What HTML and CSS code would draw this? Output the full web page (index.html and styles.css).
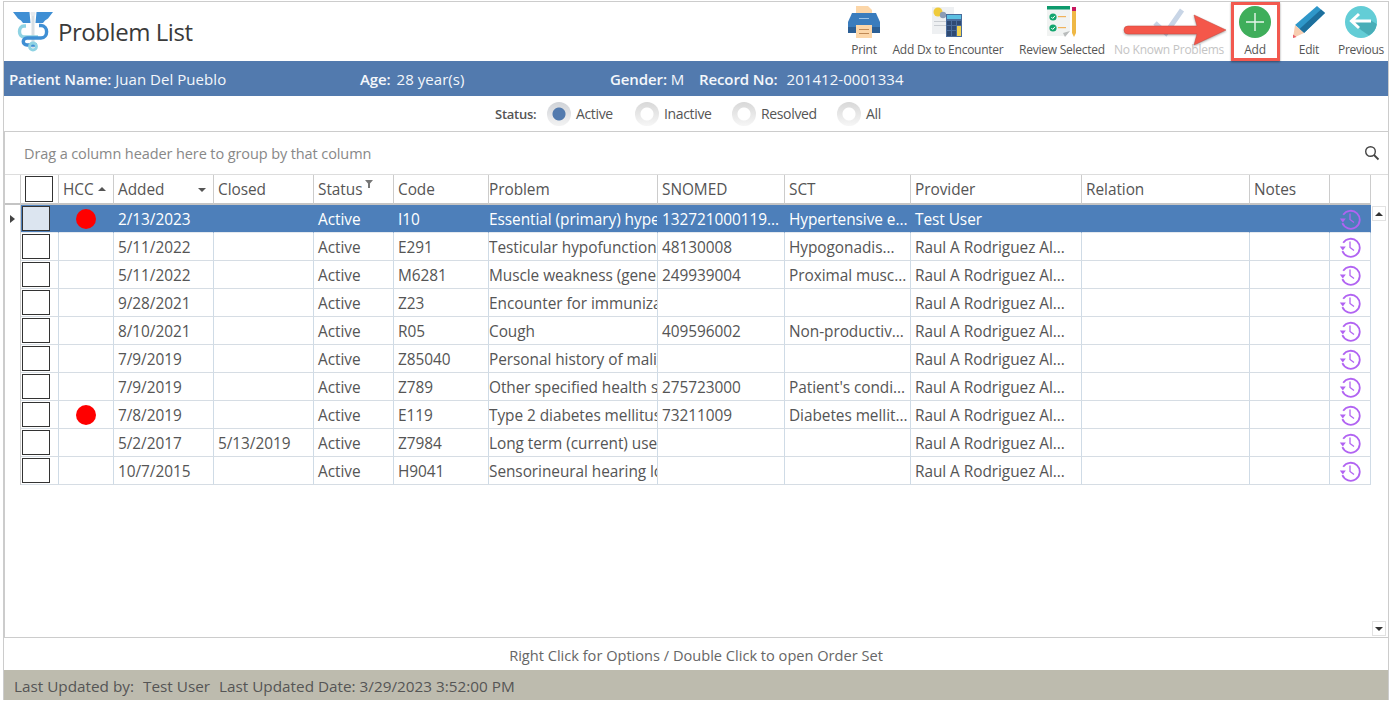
FILE: index.html
```html
<!DOCTYPE html>
<html lang="en">
<head>
<meta charset="utf-8">
<title>Problem List</title>
<link rel="stylesheet" href="styles.css">
</head>
<body>
<svg class="sprite" width="0" height="0" aria-hidden="true">
  <symbol id="history" viewBox="0 0 22 22">
    <path d="M4.200 6.800A9 9 0 1 1 3.400 15.200" fill="none" stroke="#b163f2" stroke-width="1.800"/>
    <path d="M0.800 10.400H6.800L3.800 14.600Z" fill="#b163f2"/>
    <path d="M11 5.500V11.500L15 14.500" fill="none" stroke="#b163f2" stroke-width="1.300"/>
  </symbol>
</svg>
<div class="app">
  <header class="top">
    <svg class="logo" width="40" height="40" viewBox="0 0 40 40">
      <path d="M0 0H16.500L17.500 11H10L8 8.500L5 6.500Z" fill="#3f8fd4"/>
      <path d="M40 0H23.500L22.500 11H30L32 8.500L35 6.500Z" fill="#3f8fd4"/>
      <rect x="18.500" y="0" width="3" height="36" fill="#d8dfe4"/>
      <circle cx="20" cy="1.500" r="2.500" fill="#e6eaee"/>
      <path d="M13 14H11C5 14 5 25 11 25H25" fill="none" stroke="#8fd3e3" stroke-width="3.400"/>
      <path d="M26 13.500H28C35.500 13.500 35.500 26 28 26H14C9 26 9 33 14 33H24" fill="none" stroke="#3f8fd4" stroke-width="3.400"/>
      <circle cx="20" cy="34.500" r="3.500" fill="none" stroke="#8fd3e3" stroke-width="2.800"/>
    </svg>
    <h1 class="title">Problem List</h1>
    <nav class="tools">
      <div class="tool tool-print">
        <svg width="32" height="32" viewBox="0 0 32 32">
          <path d="M8 0H20L24 4V12H8Z" fill="#fcd6a8"/>
          <path d="M4 7H28L32 16V27H0V16Z" fill="#3a7cbd"/>
          <rect x="0" y="21" width="32" height="6" fill="#2c5f95"/>
          <rect x="8" y="19" width="16" height="13" fill="#fcd6a8"/>
          <rect x="11" y="23" width="10" height="1" fill="#c08a55"/>
          <rect x="11" y="27" width="10" height="1" fill="#c08a55"/>
          <rect x="11" y="12" width="10" height="1" fill="#9cc3e6"/>
        </svg>
        <span>Print</span>
      </div>
      <div class="tool tool-dx">
        <svg width="32" height="32" viewBox="0 0 32 32">
          <rect x="0" y="1" width="22" height="27" fill="#eef0f2"/>
          <circle cx="6" cy="6" r="4.500" fill="#efcb3c"/>
          <circle cx="11" cy="9" r="3.200" fill="#8d9cb5"/>
          <rect x="2" y="15" width="12" height="1" fill="#c9cdd2"/>
          <rect x="2" y="19" width="12" height="1" fill="#c9cdd2"/>
          <rect x="14" y="8" width="16" height="23" fill="#4a6c9c"/>
          <rect x="15" y="9" width="14" height="4" fill="#5cc0e2"/>
          <path d="M15 15h4v4h-4zM20 15h4v4h-4zM25 15h4v4h-4zM15 20h4v4h-4zM20 20h4v4h-4zM15 25h4v5h-4zM20 25h4v5h-4z" fill="#2f4a73"/>
          <rect x="25" y="20" width="4" height="10" fill="#f3d34e"/>
        </svg>
        <span>Add Dx to Encounter</span>
      </div>
      <div class="tool tool-review">
        <svg width="32" height="32" viewBox="0 0 32 32">
          <path d="M1 0H24V25L19 30H1Z" fill="#f1f3f2"/>
          <rect x="1" y="0" width="23" height="3.500" fill="#0d9a6c"/>
          <path d="M24 25L17 27L19 31Z" fill="#b9bcbc"/>
          <circle cx="7" cy="11" r="3.600" fill="#12a56e"/>
          <circle cx="7" cy="22" r="3.600" fill="#12a56e"/>
          <path d="M5.300 11L6.700 12.400L9 9.800M5.300 22L6.700 23.400L9 20.800" fill="none" stroke="#fff" stroke-width="1"/>
          <rect x="12" y="10" width="8" height="1.200" fill="#f0b35c"/>
          <rect x="12" y="21" width="8" height="1.200" fill="#f0b35c"/>
          <rect x="26" y="1" width="4" height="4" fill="#c8175f"/>
          <path d="M26 5H30V27L28 31L26 27Z" fill="#efb845"/>
        </svg>
        <span>Review Selected</span>
      </div>
      <div class="tool tool-nkp is-disabled">
        <svg width="32" height="32" viewBox="0 0 32 32">
          <path d="M2 17L13 27L29 4" fill="none" stroke="#c8d5e6" stroke-width="5"/>
        </svg>
        <span>No Known Problems</span>
      </div>
      <div class="tool tool-add">
        <svg width="32" height="32" viewBox="0 0 32 32">
          <circle cx="16" cy="16" r="16" fill="#3fae5b"/>
          <path d="M16 7V25M7 16H25" stroke="#e8f6ec" stroke-width="1.400"/>
        </svg>
        <span>Add</span>
      </div>
      <div class="tool tool-edit">
        <svg width="32" height="32" viewBox="0 0 32 32">
          <path d="M24 0L32 7L11 27L2 19Z" fill="#2f97c9"/>
          <path d="M28 3.500L32 7L11 27L6.500 23Z" fill="#1d6f9c"/>
          <path d="M2 19L11 27L0 32Z" fill="#f7cdb0"/>
          <path d="M0 28.500L3.500 31L0 32Z" fill="#e8606a"/>
        </svg>
        <span>Edit</span>
      </div>
      <div class="tool tool-prev">
        <svg width="32" height="32" viewBox="0 0 32 32">
          <circle cx="16" cy="16" r="16" fill="#63cdd6"/>
          <path d="M9 17L16 24L24 29.500A16 16 0 0 0 31.800 18L25 14H9Z" fill="#49aeb8"/>
          <path d="M14 8L6.500 15L14 22M7 15H26" fill="none" stroke="#fff" stroke-width="3"/>
        </svg>
        <span>Previous</span>
      </div>
    </nav>
  </header>

  <section class="patient">
    <div class="pf pf-name"><b>Patient Name:</b> Juan Del Pueblo</div>
    <div class="pf pf-age"><b>Age:</b> 28 year(s)</div>
    <div class="pf pf-gender"><b>Gender:</b> M</div>
    <div class="pf pf-record"><b>Record No:</b> 201412-0001334</div>
  </section>

  <section class="status">
    <span class="status-label">Status:</span>
    <label class="radio is-on"><i></i>Active</label>
    <label class="radio r-inactive"><i></i>Inactive</label>
    <label class="radio r-resolved"><i></i>Resolved</label>
    <label class="radio r-all"><i></i>All</label>
  </section>

  <section class="grid">
    <div class="group">
      <span>Drag a column header here to group by that column</span>
      <svg width="16" height="16" viewBox="0 0 16 16"><circle cx="6.500" cy="6.500" r="4.800" fill="none" stroke="#444" stroke-width="1.400"/><path d="M10 10L14.500 14.500" stroke="#444" stroke-width="1.800"/></svg>
    </div>
    <div class="grid-body">
      <table class="tbl">
        <colgroup>
          <col class="c-ind"><col class="c-chk"><col class="c-hcc"><col class="c-date"><col class="c-date">
          <col class="c-status"><col class="c-code"><col class="c-prob"><col class="c-sno"><col class="c-sct">
          <col class="c-prov"><col class="c-rel"><col class="c-notes"><col class="c-hist">
        </colgroup>
        <thead>
          <tr>
            <th></th>
            <th class="chk-head"><span class="box"></span></th>
            <th><div class="th-in">HCC<i class="sort-up"></i></div></th>
            <th><div class="th-in th-spread">Added<i class="sort-down"></i></div></th>
            <th>Closed</th>
            <th><div class="th-in">Status<svg class="funnel" width="8" height="8" viewBox="0 0 8 8"><path d="M0 0H8L5 3.500V8H3V3.500Z" fill="#777"/></svg></div></th>
            <th>Code</th><th>Problem</th><th>SNOMED</th><th>SCT</th><th>Provider</th><th>Relation</th><th>Notes</th><th></th>
          </tr>
        </thead>
        <tbody>
          <tr class="sel">
            <td class="ind"><i></i></td><td class="chk"><span class="box"></span></td><td class="hcc"><i class="dot"></i></td>
            <td>2/13/2023</td><td></td><td>Active</td><td>I10</td><td>Essential (primary) hypertension</td><td>132721000119...</td><td>Hypertensive e...</td><td>Test User</td><td></td><td></td>
            <td class="hist"><svg width="22" height="22"><use href="#history"/></svg></td>
          </tr>
          <tr>
            <td class="ind"></td><td class="chk"><span class="box"></span></td><td class="hcc"></td>
            <td>5/11/2022</td><td></td><td>Active</td><td>E291</td><td>Testicular hypofunction</td><td>48130008</td><td>Hypogonadis...</td><td>Raul A Rodriguez Al...</td><td></td><td></td>
            <td class="hist"><svg width="22" height="22"><use href="#history"/></svg></td>
          </tr>
          <tr>
            <td class="ind"></td><td class="chk"><span class="box"></span></td><td class="hcc"></td>
            <td>5/11/2022</td><td></td><td>Active</td><td>M6281</td><td>Muscle weakness (generalized)</td><td>249939004</td><td>Proximal musc...</td><td>Raul A Rodriguez Al...</td><td></td><td></td>
            <td class="hist"><svg width="22" height="22"><use href="#history"/></svg></td>
          </tr>
          <tr>
            <td class="ind"></td><td class="chk"><span class="box"></span></td><td class="hcc"></td>
            <td>9/28/2021</td><td></td><td>Active</td><td>Z23</td><td>Encounter for immunization</td><td></td><td></td><td>Raul A Rodriguez Al...</td><td></td><td></td>
            <td class="hist"><svg width="22" height="22"><use href="#history"/></svg></td>
          </tr>
          <tr>
            <td class="ind"></td><td class="chk"><span class="box"></span></td><td class="hcc"></td>
            <td>8/10/2021</td><td></td><td>Active</td><td>R05</td><td>Cough</td><td>409596002</td><td>Non-productiv...</td><td>Raul A Rodriguez Al...</td><td></td><td></td>
            <td class="hist"><svg width="22" height="22"><use href="#history"/></svg></td>
          </tr>
          <tr>
            <td class="ind"></td><td class="chk"><span class="box"></span></td><td class="hcc"></td>
            <td>7/9/2019</td><td></td><td>Active</td><td>Z85040</td><td>Personal history of malignancy</td><td></td><td></td><td>Raul A Rodriguez Al...</td><td></td><td></td>
            <td class="hist"><svg width="22" height="22"><use href="#history"/></svg></td>
          </tr>
          <tr>
            <td class="ind"></td><td class="chk"><span class="box"></span></td><td class="hcc"></td>
            <td>7/9/2019</td><td></td><td>Active</td><td>Z789</td><td>Other specified health status</td><td>275723000</td><td>Patient's condi...</td><td>Raul A Rodriguez Al...</td><td></td><td></td>
            <td class="hist"><svg width="22" height="22"><use href="#history"/></svg></td>
          </tr>
          <tr>
            <td class="ind"></td><td class="chk"><span class="box"></span></td><td class="hcc"><i class="dot"></i></td>
            <td>7/8/2019</td><td></td><td>Active</td><td>E119</td><td>Type 2 diabetes mellitus without</td><td>73211009</td><td>Diabetes mellit...</td><td>Raul A Rodriguez Al...</td><td></td><td></td>
            <td class="hist"><svg width="22" height="22"><use href="#history"/></svg></td>
          </tr>
          <tr>
            <td class="ind"></td><td class="chk"><span class="box"></span></td><td class="hcc"></td>
            <td>5/2/2017</td><td>5/13/2019</td><td>Active</td><td>Z7984</td><td>Long term (current) use of oral</td><td></td><td></td><td>Raul A Rodriguez Al...</td><td></td><td></td>
            <td class="hist"><svg width="22" height="22"><use href="#history"/></svg></td>
          </tr>
          <tr>
            <td class="ind"></td><td class="chk"><span class="box"></span></td><td class="hcc"></td>
            <td>10/7/2015</td><td></td><td>Active</td><td>H9041</td><td>Sensorineural hearing loss</td><td></td><td></td><td>Raul A Rodriguez Al...</td><td></td><td></td>
            <td class="hist"><svg width="22" height="22"><use href="#history"/></svg></td>
          </tr>
        </tbody>
      </table>
      <div class="scroll">
        <span class="sb-btn"><i class="sb-up"></i></span>
        <span class="sb-btn"><i class="sb-down"></i></span>
      </div>
    </div>
  </section>

  <div class="hint">Right Click for Options / Double Click to open Order Set</div>
  <footer class="foot"><span>Last Updated by:</span><span>Test User</span><span>Last Updated Date: 3/29/2023 3:52:00 PM</span></footer>

  <svg class="callout-arrow" width="108" height="36" viewBox="0 0 108 36">
    <path d="M5 13H74L71 2L103 17L71 32L74 21H5A4 4 0 0 1 5 13Z" fill="#f4574a" stroke="#c9463c" stroke-width="0.500"/>
  </svg>
  <div class="callout-box"></div>
</div>
</body>
</html>
```

FILE: styles.css
```css
* { box-sizing: border-box; }
html, body { margin: 0; padding: 0; background: #fff; }
body { font-family: "Open Sans", "Noto Sans", sans-serif; color: #555; overflow: hidden; }
.sprite { position: absolute; }

.app {
  position: relative;
  display: flex;
  flex-direction: column;
  width: 1386px;
  height: 699px;
  margin: 1px 0 0 3px;
  border-top: 1px solid #ccc;
  border-left: 1px solid #ccc;
  border-right: 1px solid #ccc;
}

/* header */
.top { display: flex; align-items: flex-start; height: 59px; flex: none; }
.logo { margin: 10px 0 0 9px; flex: none; }
.title { margin: 12px 0 0 5px; font-size: 24px; font-weight: 500; line-height: 36px; color: #3a3a3a; letter-spacing: -0.450px; }
.tools { display: flex; margin-left: auto; }
.tool { display: flex; flex-direction: column; align-items: center; padding-top: 4px; font-size: 12px; letter-spacing: -0.250px; color: #555; white-space: nowrap; }
.tool span { margin-top: 4px; line-height: 16px; }
.tool svg { flex: none; }
.tool-print { width: 40px; }
.tool-dx { width: 128px; }
.tool-review { width: 100px; }
.tool-nkp { width: 114px; }
.tool-add { width: 58px; }
.tool-edit { width: 50px; }
.tool-prev { width: 54px; }
.is-disabled { color: #c4c4c4; }

/* patient bar */
.patient { display: flex; align-items: center; height: 35px; flex: none; padding-left: 5px; background: #527aae; color: #f4f7fb; font-size: 15px; letter-spacing: 0.050px; }
.patient b { font-weight: 600; letter-spacing: -0.100px; }
.pf-name { width: 351px; }
.pf-age { width: 250px; }
.pf-age b { margin-right: 2px; }
.pf-gender { width: 89px; }
.pf-record b { margin-right: 5px; }

/* status */
.status { display: flex; align-items: center; height: 35px; flex: none; padding-left: 491px; font-size: 14px; letter-spacing: -0.350px; }
.status-label { width: 52px; font-size: 13px; font-weight: 600; letter-spacing: -0.250px; }
.radio { display: flex; align-items: center; gap: 5px; width: 88px; }
.r-inactive { width: 97px; }
.r-resolved { width: 105px; }
.radio i { width: 24px; height: 24px; border-radius: 50%; background: radial-gradient(circle, #fff 0 6px, transparent 7px), linear-gradient(#d8d8d8, #f6f6f6); flex: none; }
.radio.is-on i { background: radial-gradient(circle, #527aae 0 6px, transparent 7px), linear-gradient(#d0d3d8, #f3f3f3); }

/* grid */
.grid { flex: 1; min-height: 0; display: flex; flex-direction: column; border: 1px solid #ccc; border-right: none; }
.group { display: flex; align-items: center; justify-content: space-between; height: 43px; flex: none; padding: 0 8px 0 19px; font-size: 14.500px; letter-spacing: -0.100px; color: #888; border-bottom: 1px solid #ddd; }
.grid-body { display: flex; flex: 1; min-height: 0; }
.tbl { table-layout: fixed; width: 1366px; flex: none; align-self: flex-start; border-collapse: separate; border-spacing: 0; font-size: 15.400px; letter-spacing: -0.050px; color: #555; }
.c-ind { width: 16px; } .c-chk { width: 38px; } .c-hcc { width: 55px; } .c-date { width: 100px; }
.c-status { width: 80px; } .c-code { width: 95px; } .c-prob { width: 169px; } .c-sno { width: 127px; }
.c-sct { width: 126px; } .c-prov { width: 171px; } .c-rel { width: 168px; } .c-notes { width: 80px; } .c-hist { width: 41px; }

.tbl th { height: 30px; padding: 1px 0 0 4px; text-align: left; font-weight: 400; border-right: 1px solid #ccc; border-bottom: 2px solid #c4c4c4; white-space: nowrap; overflow: hidden; }
.tbl th:first-child { padding: 0; }
.tbl td { height: 28px; padding: 1px 0 0 4px; border-right: 1px solid #cfdbe6; border-bottom: 1px solid #d6dde4; white-space: nowrap; overflow: hidden; }
.tbl td:nth-child(8), .tbl th:nth-child(8) { padding-left: 0; }
.tbl td.ind { position: relative; padding: 0; border-bottom: none; border-right: 1px solid #ccc; }
.tbl td.chk { padding: 0 0 0 1px; }
.tbl th.chk-head { padding: 0 0 0 4px; }
.th-in { display: flex; align-items: center; }
.th-spread { justify-content: space-between; padding-right: 7px; }
.box { display: block; width: 28px; height: 25px; border: 1px solid #333; background: #fff; }
.chk-head .box { height: 26px; }
.sort-up { width: 0; height: 0; margin: 0 0 2px 4px; border: 4px solid transparent; border-top: 0; border-bottom: 4px solid #555; }
.sort-down { width: 0; height: 0; border: 4px solid transparent; border-bottom: 0; border-top: 4px solid #555; }
.funnel { margin: -12px 0 0 3px; }
.dot { display: block; width: 20px; height: 20px; margin: 0 auto; border-radius: 50%; background: #f00; }
.tbl td.hcc { padding: 1px 0 0 0; }
.tbl td.hist { padding: 0 0 0 9px; overflow: visible; }
.hist svg { display: block; }

.sel td { background: #4d7fba; color: #fff; border-right-color: #4d7fba; border-bottom-color: #e4e9ef; }
.sel td.ind { background: #fff; border-right-color: #ccc; }
.sel td.chk { background: #4d7fba; }
.sel .box { background: #dce5f0; }
.ind i { position: absolute; left: 5px; top: 10px; width: 0; height: 0; border: 4px solid transparent; border-right: 0; border-left: 5px solid #444; }

.scroll { flex: 1; display: flex; flex-direction: column; justify-content: space-between; padding: 31px 0 1px 1px; }
.sb-btn { display: flex; align-items: center; justify-content: center; width: 14px; height: 15px; border: 1px solid #e2e2e2; background: #fff; }
.sb-up { width: 0; height: 0; border: 4px solid transparent; border-top: 0; border-bottom: 4px solid #333; }
.sb-down { width: 0; height: 0; border: 4px solid transparent; border-bottom: 0; border-top: 4px solid #333; }

/* footer */
.hint { display: flex; align-items: center; justify-content: center; height: 32px; flex: none; padding-top: 2px; font-size: 14.600px; color: #666; }
.foot { display: flex; align-items: center; gap: 9px; height: 30px; flex: none; padding: 2px 0 0 10px; background: #bdbbae; font-size: 15.300px; color: #555; }

/* annotation overlays */
.callout-arrow { position: absolute; left: 1119px; top: 11px; filter: drop-shadow(0 1px 1px rgba(0,0,0,.35)); }
.callout-box { position: absolute; left: 1227px; top: 0; width: 49px; height: 59px; border: 3px solid #f2594f; box-shadow: 0 1px 2px rgba(0,0,0,.4); }
```
